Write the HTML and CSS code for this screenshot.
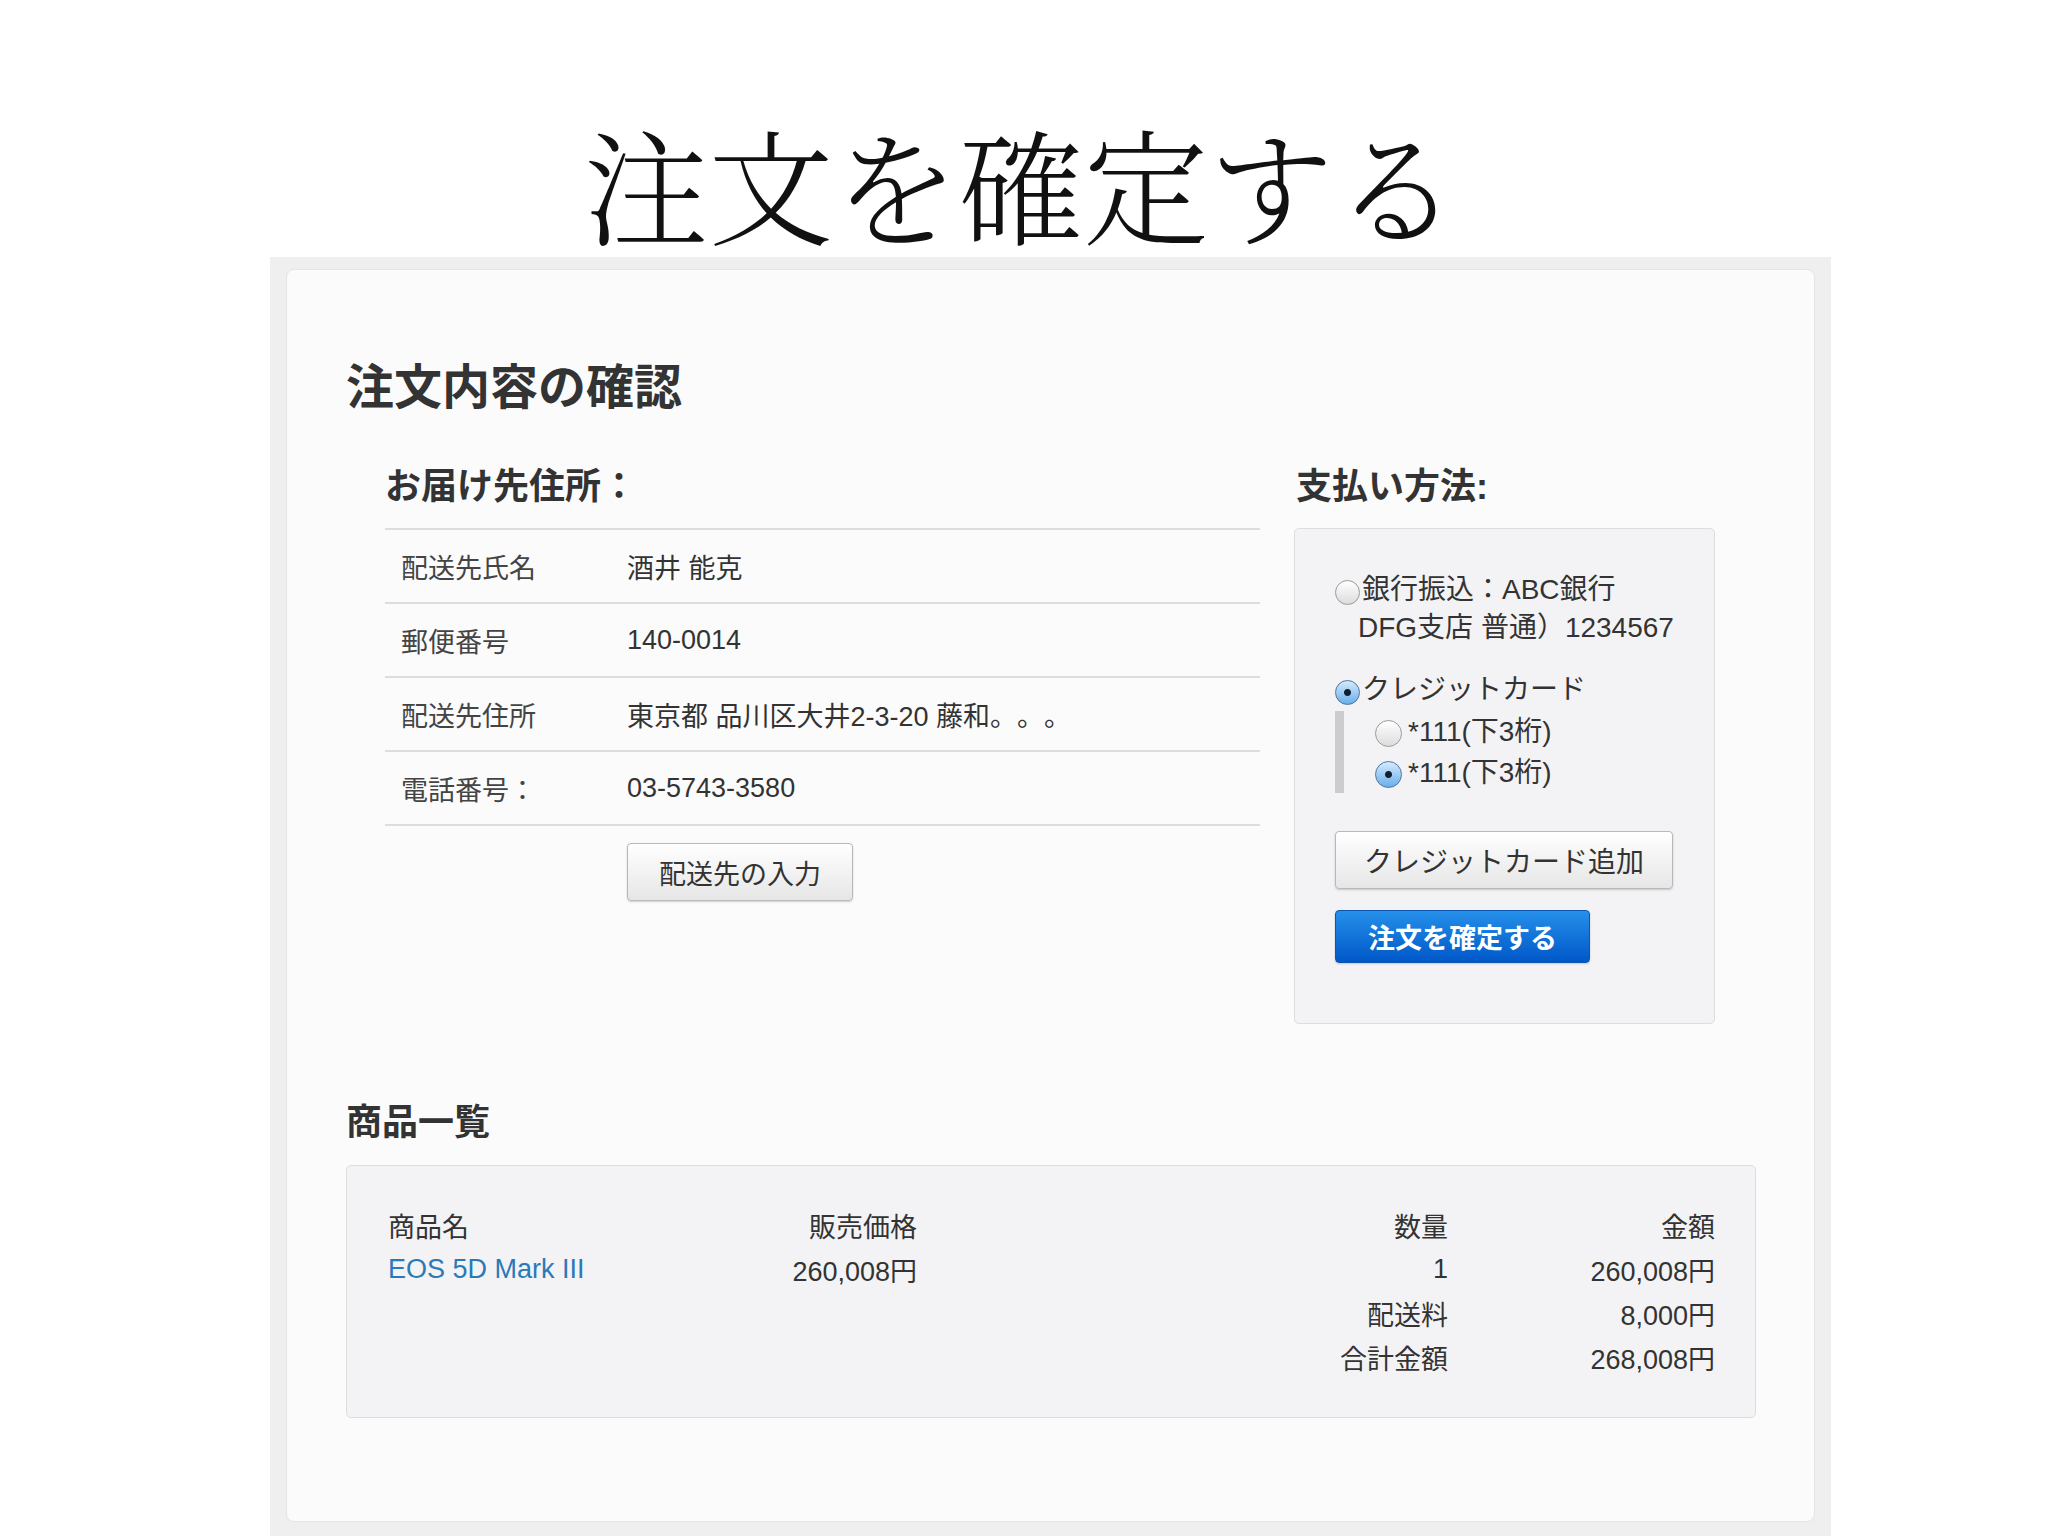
FILE: index.html
```html
<!DOCTYPE html>
<html lang="ja">
<head>
    <meta charset="UTF-8">
    <title>注文を確定する</title>
    <link rel="stylesheet" href="styles.css">
</head>
<body>
    <div class="slide-title">注文を確定する</div>

    <div class="frame">
        <div class="card">
            <h1>注文内容の確認</h1>

            <div class="top-row">
                <div class="address">
                    <h2>お届け先住所：</h2>
                    <div class="addr-table">
                        <div class="addr-row"><span class="label">配送先氏名</span><span>酒井 能克</span></div>
                        <div class="addr-row"><span class="label">郵便番号</span><span>140-0014</span></div>
                        <div class="addr-row"><span class="label">配送先住所</span><span>東京都 品川区大井2-3-20 藤和。。。</span></div>
                        <div class="addr-row"><span class="label">電話番号：</span><span>03-5743-3580</span></div>
                    </div>
                    <button class="btn btn-address">配送先の入力</button>
                </div>

                <div class="payment">
                    <h2>支払い方法:</h2>
                    <div class="payment-box">
                        <label class="opt">
                            <input type="radio" name="pay" class="radio">銀行振込：ABC銀行<br>DFG支店 普通）1234567
                        </label>
                        <label class="opt opt-card">
                            <input type="radio" name="pay" class="radio" checked>クレジットカード
                        </label>
                        <div class="card-list">
                            <label class="sub-opt"><input type="radio" name="cc" class="radio">*111(下3桁)</label>
                            <label class="sub-opt"><input type="radio" name="cc" class="radio" checked>*111(下3桁)</label>
                        </div>
                        <button class="btn btn-add">クレジットカード追加</button>
                        <button class="btn btn-primary">注文を確定する</button>
                    </div>
                </div>
            </div>

            <h2 class="items-title">商品一覧</h2>
            <div class="items-box">
                <div class="items-grid">
                    <span>商品名</span>
                    <span class="r">販売価格</span>
                    <span class="r">数量</span>
                    <span class="r">金額</span>

                    <a href="#" class="product-link">EOS 5D Mark III</a>
                    <span class="r">260,008円</span>
                    <span class="r">1</span>
                    <span class="r">260,008円</span>

                    <span></span><span></span>
                    <span class="r">配送料</span>
                    <span class="r">8,000円</span>

                    <span></span><span></span>
                    <span class="r">合計金額</span>
                    <span class="r">268,008円</span>
                </div>
            </div>
        </div>
    </div>
</body>
</html>
```

FILE: styles.css
```css
/* Global */
* {
    margin: 0;
    padding: 0;
    box-sizing: border-box;
}

body {
    width: 2048px;
    height: 1536px;
    overflow: hidden;
    background-color: #ffffff;
    font-family: "Liberation Sans", "Noto Sans CJK JP", sans-serif;
    color: #333;
    text-spacing-trim: space-all;
}

/* Slide title */
.slide-title {
    padding-top: 120px;
    margin-bottom: 8px;
    height: 249px;
    line-height: 125px;
    font-size: 125px;
    font-family: "Noto Serif CJK JP", "Noto Sans CJK JP", serif;
    font-weight: 300;
    color: #111;
    text-align: center;
    padding-right: 6px;
}

/* Screenshot frame */
.frame {
    margin-left: 270px;
    width: 1561px;
    height: 1279px;
    background-color: #efefef;
    padding: 12px 16px 14px 16px;
}

.card {
    height: 100%;
    background-color: #fbfbfc;
    border: 1px solid #e4e4e4;
    border-radius: 8px;
    padding: 88px 0 0 59px;
}

h1 {
    font-size: 48px;
    line-height: 60px;
    font-weight: bold;
    color: #333;
}

h2 {
    font-size: 36px;
    line-height: 50px;
    font-weight: bold;
    color: #333;
    margin-bottom: 16px;
}

/* Top row: address + payment */
.top-row {
    display: flex;
    gap: 34px;
    margin-top: 44px;
    margin-left: 39px;
}

.address {
    width: 875px;
}

.addr-table {
    border-top: 2px solid #dddddd;
}

.addr-row {
    display: grid;
    grid-template-columns: 226px 1fr;
    align-items: center;
    height: 74px;
    padding-left: 16px;
    border-bottom: 2px solid #dddddd;
    font-size: 27px;
    color: #333;
}

.addr-row .label {
    color: #444;
}

.btn {
    font-family: inherit;
    font-size: 27px;
    color: #333;
    border: 1px solid #b8b8b8;
    border-radius: 4px;
    background: linear-gradient(#ffffff, #e6e6e6);
    box-shadow: 0 1px 2px rgba(0, 0, 0, 0.18);
    cursor: pointer;
    display: block;
}

.btn-address {
    margin: 17px 0 0 242px;
    width: 226px;
    height: 58px;
}

/* Payment */
.payment {
    width: 421px;
}

.payment h2 {
    padding-left: 2px;
}

.payment-box {
    height: 496px;
    background-color: #f3f3f5;
    border: 1px solid #dedede;
    border-radius: 5px;
    padding: 42px 0 0 40px;
    font-size: 28px;
    color: #333;
}

.opt {
    display: block;
    padding-left: 23px;
    line-height: 38px;
}

.opt-card {
    margin-top: 24px;
}

.radio {
    appearance: none;
    -webkit-appearance: none;
    width: 25px;
    height: 25px;
    border-radius: 50%;
    border: 1px solid #9a9a9a;
    background: linear-gradient(#ffffff, #dcdcdc);
    vertical-align: -6px;
    margin: 0 2px 0 -23px;
}

.radio:checked {
    border-color: #50739c;
    background:
        radial-gradient(circle, #102030 0 3px, transparent 4px),
        linear-gradient(#d4ebfd, #6aaeea);
}

.card-list {
    border-left: 9px solid #cccccc;
    padding-left: 31px;
    margin-top: 2px;
}

.sub-opt {
    display: block;
    line-height: 41px;
    padding-left: 6px;
}

.sub-opt .radio {
    width: 27px;
    height: 27px;
    margin: 0 6px 0 -6px;
    vertical-align: -6px;
}

.btn-add {
    margin-top: 38px;
    width: 338px;
    height: 58px;
    font-size: 28px;
}

.btn-primary {
    margin-top: 21px;
    width: 255px;
    height: 53px;
    color: #ffffff;
    font-weight: bold;
    border-color: #0a57b0;
    background: linear-gradient(#2590ea, #0057c8);
}

/* Items */
.items-title {
    margin-top: 74px;
    margin-bottom: 17px;
}

.items-box {
    width: 1410px;
    height: 253px;
    background-color: #f3f3f5;
    border: 1px solid #dddddd;
    border-radius: 5px;
    padding: 37px 40px 0 41px;
}

.items-grid {
    display: grid;
    grid-template-columns: 300px 229px 531px 267px;
    grid-auto-rows: 44px;
    align-items: center;
    font-size: 27px;
    color: #333;
}

.items-grid .r {
    text-align: right;
}

.product-link {
    color: #2a7ab9;
    text-decoration: none;
}
```
